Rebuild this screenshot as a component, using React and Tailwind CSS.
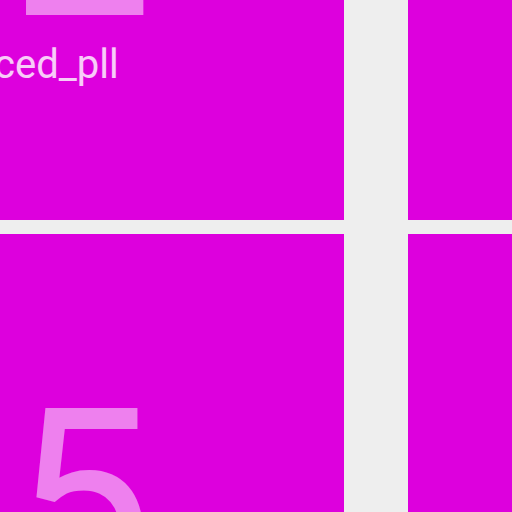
function Tile({ digit, label, className }) {
  return (
    <section className={`overflow-hidden bg-[#dd00dd] text-white ${className}`}>
      {digit && <p className="pl-[11px] text-[252px] leading-[234px] text-white/50">{digit}</p>}
      {label && <p className="-ml-1.5 text-[40px] leading-[38px] text-white/80 whitespace-nowrap">{label}</p>}
    </section>
  );
}

export default function App() {
  return (
    <main className="flex h-screen gap-16 overflow-hidden bg-[#eeeeee] font-[Roboto,sans-serif]">
      <div className="flex w-[67.2%] shrink-0 flex-col gap-[14px]">
        <Tile digit="2" label="ced_pll" className="h-[220px] shrink-0 [&>p:first-child]:-mt-[188px]" />
        <Tile digit="5" className="min-h-0 flex-1 pt-[151px]" />
      </div>
      <div className="flex flex-1 flex-col gap-[14px]">
        <Tile className="h-[220px] shrink-0" />
        <Tile className="min-h-0 flex-1" />
      </div>
    </main>
  );
}
